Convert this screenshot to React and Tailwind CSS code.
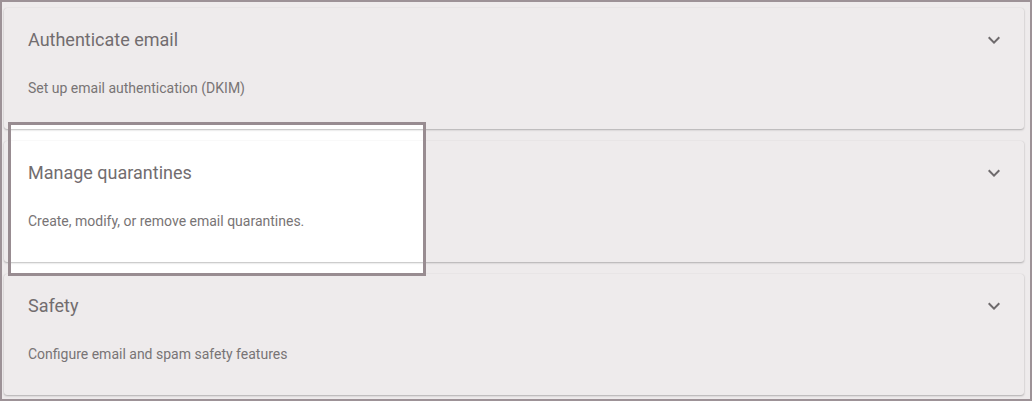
const sections = [
  { title: 'Authenticate email', text: 'Set up email authentication (DKIM)' },
  { title: 'Manage quarantines', text: 'Create, modify, or remove email quarantines.' },
  { title: 'Safety', text: 'Configure email and spam safety features' },
]

function ExpandIcon() {
  return (
    <svg viewBox="0 0 24 24" className="w-6 h-6 fill-[#6e6a6c]">
      <path d="M16.59 8.59 12 13.17 7.41 8.59 6 10l6 6 6-6z" />
    </svg>
  )
}

function SectionCard({ title, text }) {
  return (
    <div className="rounded-[3px] shadow-[0_1px_2px_rgba(0,0,0,0.25),0_0_1px_rgba(0,0,0,0.12)] h-[121px] pl-6 pr-[18px] pt-5">
      <div className="flex items-center justify-between h-6">
        <h2 className="text-[18px] leading-6 text-[#726d6f]">{title}</h2>
        <ExpandIcon />
      </div>
      <p className="mt-[26px] text-[14px] leading-5 text-[#787475]">{text}</p>
    </div>
  )
}

export default function App() {
  return (
    <div
      className="relative w-[1032px] h-[401px] bg-[#eeebec] border-2 border-[#9d9297] overflow-hidden"
      style={{ fontFamily: 'Roboto, "Liberation Sans", sans-serif' }}
    >
      {/* highlight fill sits under the cards */}
      <div className="absolute left-[6px] top-[120px] w-[418px] h-[154px] bg-white" />
      <div className="relative flex flex-col gap-3 pt-[6px] pl-[2px] pr-[6px]">
        {sections.map(s => (
          <SectionCard key={s.title} {...s} />
        ))}
      </div>
      {/* highlight outline over the cards */}
      <div className="absolute left-[6px] top-[120px] w-[418px] h-[154px] border-[3px] border-[#988c91] pointer-events-none" />
    </div>
  )
}
